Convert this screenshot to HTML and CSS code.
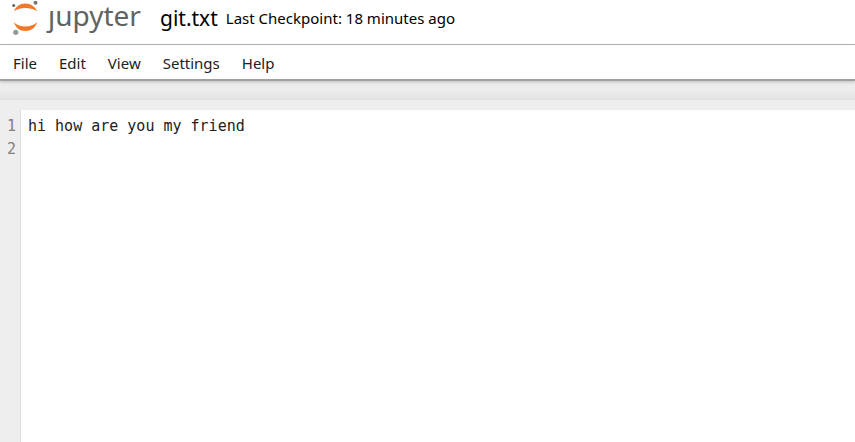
FILE: index.html
```html
<!DOCTYPE html>
<html lang="en">
<head>
<meta charset="utf-8">
<title>git.txt</title>
<link rel="stylesheet" href="styles.css">
</head>
<body>
<header class="top">
  <a class="brand" href="#" aria-label="jupyter">
    <svg class="mark" viewBox="0 0 28 36" aria-hidden="true">
      <path fill="#f37726" d="M1.800 11.600C3.500 6.600 8 3.400 13.300 3.400S23.600 6.600 25.300 11.600C22.500 9.200 18.200 8 13.300 8S4.200 9.200 1.800 11.600Z"/>
      <path fill="#f37726" d="M1.800 22C3.500 27.800 8 31 13.300 31S23.600 27.800 25.300 22C22.500 25 18.200 26.400 13.300 26.400S4.200 25 1.800 22Z"/>
      <circle cx="1.700" cy="5.500" r="1.500" fill="#616262"/>
      <circle cx="23.500" cy="2.700" r="2" fill="#767677"/>
      <circle cx="3.800" cy="32.300" r="2.600" fill="#989798"/>
    </svg>
    <span class="wordmark">ȷupyter</span>
  </a>
  <h1 class="title">git.txt</h1>
  <span class="checkpoint">Last Checkpoint: 18 minutes ago</span>
</header>
<nav class="menu">
  <button type="button">File</button>
  <button type="button">Edit</button>
  <button type="button">View</button>
  <button type="button">Settings</button>
  <button type="button">Help</button>
</nav>
<main class="main">
  <div class="band"></div>
  <div class="editor">
    <div class="gutter" aria-hidden="true"><div>1</div><div>2</div></div>
    <textarea class="code" aria-label="File contents" spellcheck="false">hi how are you my friend
</textarea>
  </div>
</main>
</body>
</html>
```
FILE: styles.css
```css
* {
  box-sizing: border-box;
}

body {
  margin: 0;
  height: 100vh;
  display: flex;
  flex-direction: column;
  overflow: hidden;
  background: #eee;
  color: #000;
  font-family: "Segoe UI", "Noto Sans", "Open Sans", sans-serif;
  font-size: 15px;
}

.top {
  display: flex;
  align-items: center;
  height: 45px;
  padding: 0 12px 8px;
  border-bottom: 1px solid #b5b5b5;
  background: #fff;
}

.brand {
  display: flex;
  align-items: flex-start;
  width: 148px;
  gap: 8px;
  color: #616262;
  text-decoration: none;
}

.mark {
  width: 28px;
  height: 36px;
}

.wordmark {
  font-family: "Noto Sans", "Open Sans", sans-serif;
  font-size: 28px;
  line-height: 30px;
}

.title {
  margin: 0 8px 0 0;
  font-size: 21px;
  font-weight: 400;
  line-height: 36px;
}

.menu {
  display: flex;
  height: 36px;
  padding: 0 2px;
  border-bottom: 2px solid #a0a0a0;
  background: #fff;
  box-shadow: 0 1px 3px rgba(0, 0, 0, 0.2);
  z-index: 1;
}

.menu button {
  padding: 2px 11px 0;
  border: 0;
  background: none;
  color: #212121;
  font: inherit;
}

.main {
  flex: 1;
  display: flex;
  flex-direction: column;
}

.band {
  height: 19px;
  margin-bottom: 10px;
  border-bottom: 1px solid #e0e0e0;
  background: linear-gradient(#ececec 50%, #e3e3e3);
}

.editor {
  flex: 1;
  display: flex;
  font-family: "DejaVu Sans Mono", monospace;
  font-size: 15px;
  line-height: 23px;
}

.gutter {
  width: 21px;
  padding: 5px 4px 0 0;
  border-right: 1px solid #ddd;
  color: #808080;
  text-align: right;
}

.code {
  flex: 1;
  padding: 5px 7px;
  border: 0;
  outline: 0;
  resize: none;
  background: #fff;
  color: #212121;
  font: inherit;
}
```
